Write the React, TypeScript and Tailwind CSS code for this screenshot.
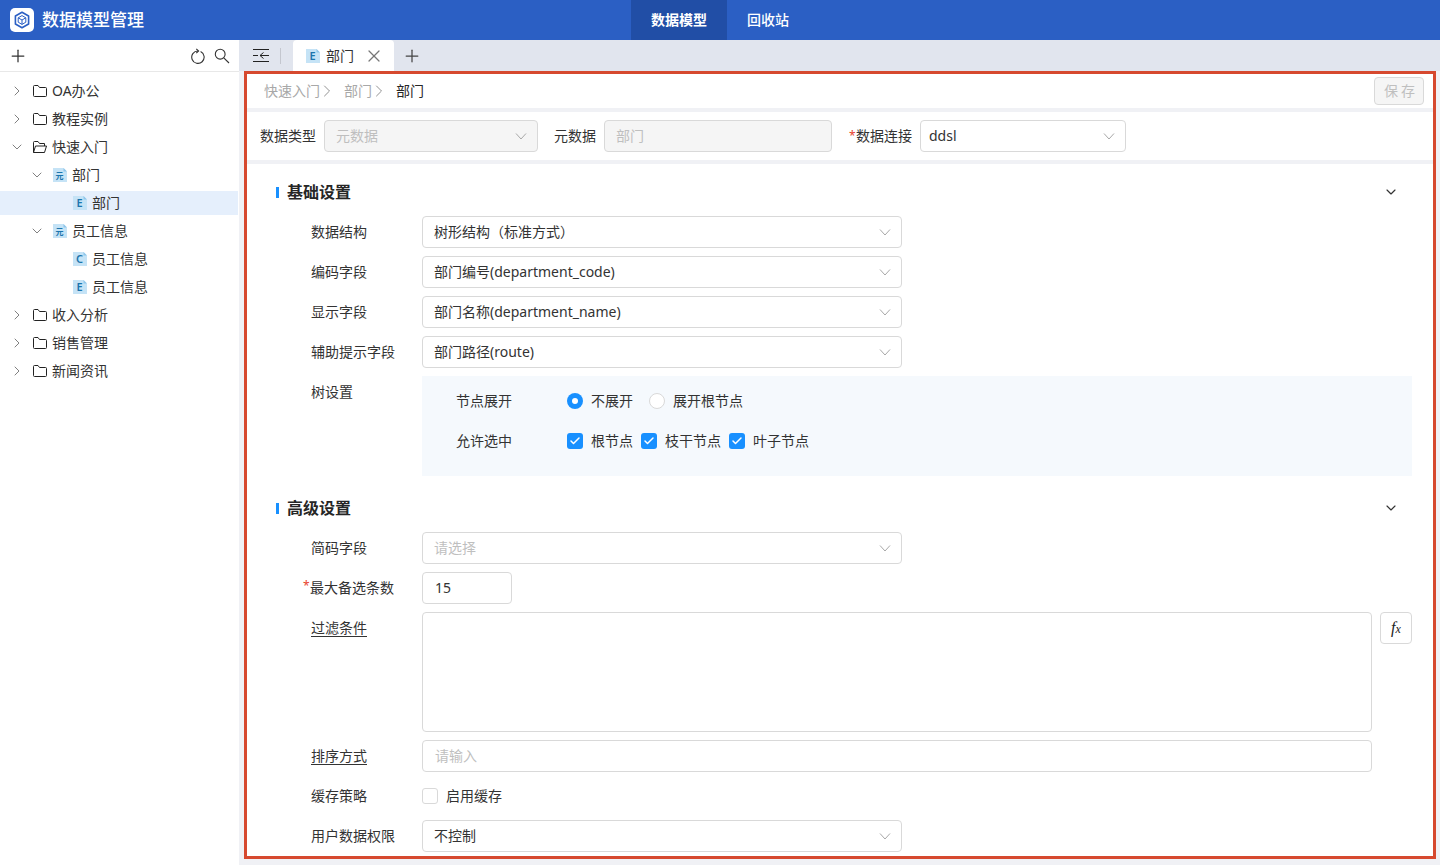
import { ChevronDown, ChevronRight, Check, Plus, X } from "lucide-react";

const tree = [
  { label: "OA办公", level: 0, kind: "folder" },
  { label: "教程实例", level: 0, kind: "folder" },
  { label: "快速入门", level: 0, kind: "open" },
  { label: "部门", level: 1, kind: "元", expanded: true },
  { label: "部门", level: 2, kind: "E", selected: true },
  { label: "员工信息", level: 1, kind: "元", expanded: true },
  { label: "员工信息", level: 2, kind: "C" },
  { label: "员工信息", level: 2, kind: "E" },
  { label: "收入分析", level: 0, kind: "folder" },
  { label: "销售管理", level: 0, kind: "folder" },
  { label: "新闻资讯", level: 0, kind: "folder" },
];

function FileBadge({ letter }: { letter: string }) {
  return (
    <svg width="14" height="14" viewBox="0 0 14 14" className="shrink-0">
      <path d="M0 0H10.5L14 3.5V14H0Z" fill="#c5e3f6" />
      <path d="M10.5 0L14 3.5H10.5Z" fill="#8fc6ea" />
      <text
        x="6.5"
        y={letter === "元" ? 10.5 : 11}
        textAnchor="middle"
        fontSize={letter === "元" ? 8 : 11}
        fontWeight="600"
        fill="#1b75ad"
      >
        {letter}
      </text>
    </svg>
  );
}

function FolderIcon({ open }: { open?: boolean }) {
  return (
    <svg width="16" height="14" viewBox="0 0 16 14" fill="none" stroke="#222" strokeWidth="1" className="shrink-0">
      {open ? (
        <path d="M1.5 12.5V2.5A1 1 0 0 1 2.5 1.5H6L7.5 3.5H12.5V6M1.5 12.5H12.5L14.5 6H3.5L1.5 12.5Z" strokeLinejoin="round" />
      ) : (
        <path d="M1.5 2.5A1 1 0 0 1 2.5 1.5H6L7.5 3.5H13.5A1 1 0 0 1 14.5 4.5V11.5A1 1 0 0 1 13.5 12.5H2.5A1 1 0 0 1 1.5 11.5Z" strokeLinejoin="round" />
      )}
    </svg>
  );
}

function SelectChevron() {
  return (
    <svg width="12" height="12" viewBox="0 0 12 12" fill="none" stroke="#a8a8a8" strokeWidth="1" className="shrink-0">
      <path d="M1 3.5L6 9L11 3.5" />
    </svg>
  );
}

function TreeRow({ item }: { item: (typeof tree)[number] }) {
  const hasCaret = item.level < 2;
  const expanded = item.kind === "open" || item.expanded;
  return (
    <div className={`flex h-6 w-[238px] items-center ${item.selected ? "bg-[#e5effc]" : ""}`}>
      <div className={item.level === 0 ? "w-[9px]" : item.level === 1 ? "w-[29px]" : "w-[49px]"} />
      <div className="flex w-[16px] items-center justify-center text-[#666]">
        {hasCaret && (expanded ? <ChevronDown size={16} strokeWidth={1.25} /> : <ChevronRight size={16} strokeWidth={1.25} />)}
      </div>
      <div className={item.kind === "folder" || item.kind === "open" ? "w-[7px]" : "w-[8px]"} />
      {item.kind === "folder" && <FolderIcon />}
      {item.kind === "open" && <FolderIcon open />}
      {item.kind !== "folder" && item.kind !== "open" && <FileBadge letter={item.kind} />}
      <span className={`text-sm text-[#333] ${item.kind === "folder" || item.kind === "open" ? "ml-[4px]" : "ml-[5px]"}`}>{item.label}</span>
    </div>
  );
}

function SelectBox({ value, placeholder, disabled, width, tight }: { value?: string; placeholder?: string; disabled?: boolean; width: string; tight?: boolean }) {
  return (
    <div
      className={`flex h-8 items-center justify-between rounded border border-[#d9d9d9] pr-[10px] text-sm ${tight ? "pl-[8px]" : "pl-[11px]"} ${width} ${
        disabled ? "bg-[#f5f5f5] text-[#bfbfbf]" : "bg-white text-[#333]"
      }`}
    >
      {value ? <span>{value}</span> : <span className="text-[#bfbfbf]">{placeholder}</span>}
      <SelectChevron />
    </div>
  );
}

function FormRow({ label, required, underline, children }: { label: string; required?: boolean; underline?: boolean; children: React.ReactNode }) {
  return (
    <div className="mb-2 flex pl-[64px] pr-[21px]">
      <div className="relative flex h-8 w-[111px] shrink-0 items-center text-sm text-[#333]">
        {required && <span className="absolute left-[-8px] top-[6px] text-xs text-[#e8412c]">*</span>}
        <span className={`${required ? "ml-[-1px]" : ""} ${underline ? "underline underline-offset-[3px]" : ""}`}>{label}</span>
      </div>
      {children}
    </div>
  );
}

function SectionTitle({ title }: { title: string }) {
  return (
    <div className="mb-2 flex h-8 items-center justify-between pl-[29px] pr-[34px]">
      <div className="flex items-center">
        <div className="h-[11px] w-[3px] bg-[#1890ff]" />
        <span className="ml-2 text-base font-bold text-[#262626]">{title}</span>
      </div>
      <ChevronDown size={16} strokeWidth={1.75} className="text-[#333]" />
    </div>
  );
}

function CheckItem({ label }: { label: string }) {
  return (
    <div className="flex items-center">
      <div className="flex h-4 w-4 items-center justify-center rounded-[3px] bg-[#1890ff] text-white">
        <Check size={12} strokeWidth={3} />
      </div>
      <span className="ml-2 text-sm text-[#333]">{label}</span>
    </div>
  );
}

export default function App() {
  return (
    <div className="flex h-[865px] w-[1440px] flex-col overflow-hidden bg-white font-['Noto_Sans','Noto_Sans_CJK_SC',sans-serif]">
      <header className="flex h-10 shrink-0 items-center bg-[#2b5fc4] pl-[10px] text-white">
        <div className="flex h-6 w-6 items-center justify-center rounded-[5px] bg-white">
          <svg width="18" height="18" viewBox="0 0 18 18" fill="none" stroke="#2b5fc4">
            <path d="M9 1.2L15.6 5V13L9 16.8L2.4 13V5Z" strokeWidth="1.6" strokeLinejoin="round" />
            <path d="M9 4.6L12.8 6.8V11.2L9 13.4L5.2 11.2V6.8Z" strokeWidth="1" strokeLinejoin="round" />
            <path d="M5.2 6.8L9 9L12.8 6.8M9 9V13.4" strokeWidth="1" />
          </svg>
        </div>
        <span className="ml-2 text-[17px] font-medium">数据模型管理</span>
        <nav className="ml-[487px] flex h-full text-sm font-medium">
          <div className="flex h-full w-[96px] items-center justify-center bg-[#214ea6] font-bold">数据模型</div>
          <div className="flex h-full w-[82px] items-center justify-center">回收站</div>
        </nav>
      </header>

      <div className="flex min-h-0 flex-1">
        <aside className="w-[239px] shrink-0 bg-white">
          <div className="flex h-[32px] items-center border-b border-[#e8e8e8] pl-[8px] pr-[9px] text-[#333]">
            <Plus size={20} strokeWidth={1.5} />
            <svg width="16" height="16" viewBox="0 0 16 16" fill="none" stroke="#333" strokeWidth="1.1" className="ml-auto">
              <path d="M10.6 3.6A6.2 6.2 0 1 1 8 3" />
              <path d="M6.3 0.8L8.6 3L6.3 5.2" />
            </svg>
            <svg width="16" height="16" viewBox="0 0 16 16" fill="none" stroke="#333" strokeWidth="1.1" className="ml-2">
              <circle cx="6.2" cy="6.2" r="4.9" />
              <path d="M9.8 9.8L15 15" />
            </svg>
          </div>
          <div className="flex flex-col gap-1 pt-[7px]">
            {tree.map((item, index) => (
              <TreeRow key={index} item={item} />
            ))}
          </div>
        </aside>

        <main className="flex min-w-0 flex-1 flex-col bg-[#f0f1f5]">
          <div className="flex h-[31px] shrink-0 items-center bg-[#e1e5ee] text-[#444]">
            <div className="ml-[14px] flex h-4 w-4 items-center justify-center">
              <svg width="16" height="13" viewBox="0 0 16 13" fill="none" stroke="#222" strokeWidth="1">
                <path d="M0 0.5H16M0 12.5H16M0 6.5H5M7 6.5H16M10.5 3.5L7 6.5L10.5 9.5" />
              </svg>
            </div>
            <div className="ml-[11px] h-4 w-px bg-[#c4c7cf]" />
            <div className="ml-[12px] flex h-full w-[101px] items-center rounded-t bg-white pl-[13px]">
              <FileBadge letter="E" />
              <span className="ml-[6px] text-sm text-[#333]">部门</span>
              <X size={20} strokeWidth={1.5} className="ml-[10px] text-[#777]" />
            </div>
            <Plus size={20} strokeWidth={1.5} className="ml-[8px]" />
          </div>

          <div className="ml-[5px] mr-[4px] h-[788px] shrink-0 overflow-hidden border-[3px] border-[#d6492f] bg-[#f0f1f5]">
            <div className="flex h-[34px] items-center justify-between bg-white pl-[17px] pr-[9px] text-sm">
              <div className="flex items-center">
                <span className="text-[#a8a8a8]">快速入门</span>
                <ChevronRight size={20} strokeWidth={1.1} className="ml-[-3px] text-[#888]" />
                <span className="ml-[7px] text-[#a8a8a8]">部门</span>
                <ChevronRight size={20} strokeWidth={1.1} className="ml-[-3px] text-[#888]" />
                <span className="ml-[7px] text-[#262626]">部门</span>
              </div>
              <div className="flex h-7 w-[50px] items-center justify-center rounded border border-[#d9d9d9] bg-[#f5f5f5] pl-1 text-sm tracking-[3px] text-[#bfbfbf]">
                保存
              </div>
            </div>

            <div className="mt-1 flex h-12 items-center bg-white pl-[13px] text-sm text-[#333]">
              <span>数据类型</span>
              <div className="ml-2">
                <SelectBox value="元数据" disabled width="w-[214px]" />
              </div>
              <span className="ml-4">元数据</span>
              <div className="ml-2 flex h-8 w-[228px] items-center rounded border border-[#d9d9d9] bg-[#f5f5f5] pl-[11px] text-[#bfbfbf]">部门</div>
              <div className="relative ml-6 flex items-center">
                <span className="absolute left-[-7px] text-xs text-[#e8412c]">*</span>
                <span>数据连接</span>
              </div>
              <div className="ml-2">
                <SelectBox value="ddsl" tight width="w-[206px]" />
              </div>
            </div>

            <div className="mt-1 h-[692px] bg-white pt-3">
              <SectionTitle title="基础设置" />
              <FormRow label="数据结构">
                <SelectBox value="树形结构（标准方式）" width="w-[480px]" />
              </FormRow>
              <FormRow label="编码字段">
                <SelectBox value="部门编号(department_code)" width="w-[480px]" />
              </FormRow>
              <FormRow label="显示字段">
                <SelectBox value="部门名称(department_name)" width="w-[480px]" />
              </FormRow>
              <FormRow label="辅助提示字段">
                <SelectBox value="部门路径(route)" width="w-[480px]" />
              </FormRow>
              <div className="mb-4 flex pl-[64px] pr-[21px]">
                <div className="flex h-8 w-[111px] shrink-0 items-center text-sm text-[#333]">树设置</div>
                <div className="flex h-[100px] flex-1 flex-col gap-2 bg-[#f5f9fd] pl-[34px] pt-[9px] text-sm text-[#333]">
                  <div className="flex h-8 items-center">
                    <span className="w-[111px]">节点展开</span>
                    <div className="flex h-4 w-4 items-center justify-center rounded-full bg-[#1890ff]">
                      <div className="h-[6px] w-[6px] rounded-full bg-white" />
                    </div>
                    <span className="ml-2">不展开</span>
                    <div className="ml-4 h-4 w-4 rounded-full border border-[#d9d9d9] bg-white" />
                    <span className="ml-2">展开根节点</span>
                  </div>
                  <div className="flex h-8 items-center">
                    <span className="w-[111px]">允许选中</span>
                    <div className="flex gap-2">
                      <CheckItem label="根节点" />
                      <CheckItem label="枝干节点" />
                      <CheckItem label="叶子节点" />
                    </div>
                  </div>
                </div>
              </div>

              <SectionTitle title="高级设置" />
              <FormRow label="简码字段">
                <SelectBox placeholder="请选择" width="w-[480px]" />
              </FormRow>
              <FormRow label="最大备选条数" required>
                <div className="flex h-8 w-[90px] items-center rounded border border-[#d9d9d9] pl-3 text-sm text-[#333]">15</div>
              </FormRow>
              <FormRow label="过滤条件" underline>
                <div className="h-[120px] w-[950px] rounded border border-[#d9d9d9] bg-white" />
                <div className="ml-2 flex h-8 w-8 items-baseline justify-center rounded border border-[#d9d9d9] pt-[3px] font-['Liberation_Serif',serif] italic text-[#222]">
                  <span className="text-base">f</span>
                  <span className="text-xs">x</span>
                </div>
              </FormRow>
              <FormRow label="排序方式" underline>
                <div className="flex h-8 w-[950px] items-center rounded border border-[#d9d9d9] pl-3 text-sm text-[#bfbfbf]">请输入</div>
              </FormRow>
              <FormRow label="缓存策略">
                <div className="flex h-8 items-center">
                  <div className="h-4 w-4 rounded-[3px] border border-[#d9d9d9] bg-white" />
                  <span className="ml-2 text-sm text-[#333]">启用缓存</span>
                </div>
              </FormRow>
              <FormRow label="用户数据权限">
                <SelectBox value="不控制" width="w-[480px]" />
              </FormRow>
            </div>
          </div>
        </main>
      </div>
    </div>
  );
}
